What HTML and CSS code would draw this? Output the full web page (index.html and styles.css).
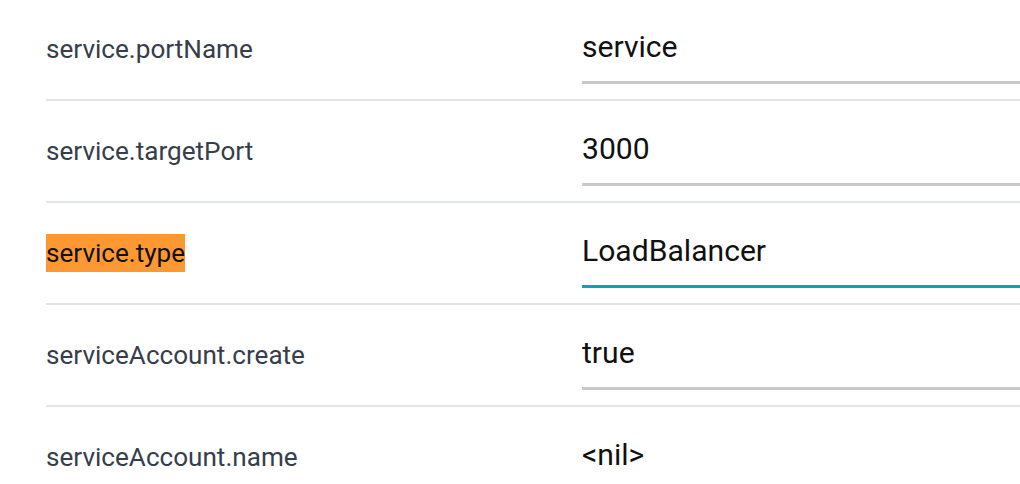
FILE: index.html
```html
<!DOCTYPE html>
<html lang="en">
<head>
<meta charset="utf-8">
<title>Values</title>
<link rel="stylesheet" href="styles.css">
</head>
<body>
<div class="table">
  <div class="row">
    <div class="key"><span class="key-text">service.portName</span></div>
    <div class="value"><div class="field">service</div></div>
  </div>
  <div class="row">
    <div class="key"><span class="key-text">service.targetPort</span></div>
    <div class="value"><div class="field">3000</div></div>
  </div>
  <div class="row">
    <div class="key"><span class="key-text match">service.type</span></div>
    <div class="value"><div class="field focused">LoadBalancer</div></div>
  </div>
  <div class="row">
    <div class="key"><span class="key-text">serviceAccount.create</span></div>
    <div class="value"><div class="field">true</div></div>
  </div>
  <div class="row">
    <div class="key"><span class="key-text">serviceAccount.name</span></div>
    <div class="value"><div class="field">&lt;nil&gt;</div></div>
  </div>
</div>
</body>
</html>
```

FILE: styles.css
```css
html, body {
  margin: 0;
  padding: 0;
  background: #ffffff;
  overflow: hidden;
}

body {
  font-family: Roboto, "Liberation Sans", sans-serif;
}

.table {
  margin-top: -1px;
  margin-left: 46px;
  display: flex;
  flex-direction: column;
}

.row {
  display: flex;
  align-items: center;
  height: 100px;
  border-bottom: 2px solid #e0e4e9;
}

.key {
  width: 536px;
  flex: none;
}

.key-text {
  display: inline-block;
  font-size: 26.1px;
  line-height: 38px;
  color: #363d4b;
}

.key-text.match {
  background: #fe9833;
  color: #111111;
}

.value {
  flex: 1;
  align-self: flex-end;
  margin-bottom: 15px;
}

.field {
  font-size: 30.1px;
  line-height: 36px;
  color: #111111;
  padding-bottom: 16px;
  border-bottom: 3px solid #c9c9c9;
}

.field.focused {
  border-bottom-color: #00a7b7;
}
```
